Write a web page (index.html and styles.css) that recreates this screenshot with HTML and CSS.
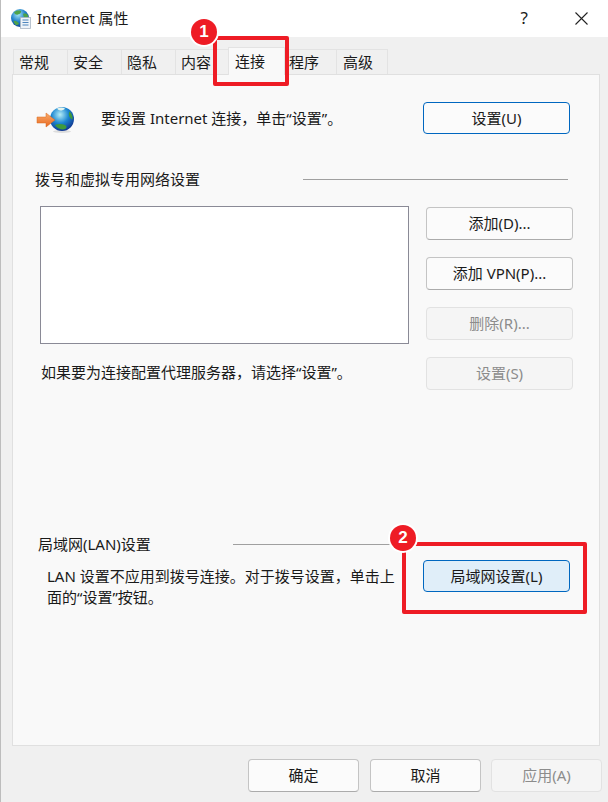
FILE: index.html
```html
<!DOCTYPE html>
<html lang="zh-CN">
<head>
  <meta charset="UTF-8" />
  <title>Internet 属性</title>
  <link rel="stylesheet" href="styles.css">
</head>
<body>
  <div class="dialog">
    <div class="titlebar">
      <svg class="title-icon" width="20" height="20" viewBox="0 0 20 20">
        <defs>
          <radialGradient id="seaSmall" cx="40%" cy="30%" r="75%">
            <stop offset="0" stop-color="#a5e6f5"/>
            <stop offset="0.55" stop-color="#1f7fc9"/>
            <stop offset="1" stop-color="#123f8f"/>
          </radialGradient>
        </defs>
        <circle cx="9" cy="9" r="9" fill="url(#seaSmall)"/>
        <path d="M3 3.500c2-2 5-2.500 7-1.500.5 1.500-1 3-3 3.500-1.500.5-3 0-4-2zM12 5c2-1 4-.5 5 1.500.3 2-.5 3.500-2 4-1.500-.5-2.500-3-3-5.500zM2.500 12c2-.5 4 .5 5.500 2.500-1 1.500-2 2-3 1.500-1-.5-2-2.500-2.500-4z" fill="#4fa34a"/>
        <rect x="9.500" y="8.500" width="10" height="11" fill="#eef3f8" stroke="#aab6c4" stroke-width="0.800"/>
        <path d="M11.500 11h6M11.500 13.500h6M11.500 16h6" stroke="#4f86bd" stroke-width="1"/>
      </svg>
      <span class="title-text">Internet 属性</span>
      <span class="title-help">?</span>
      <svg class="title-close" width="13" height="13" viewBox="0 0 13 13">
        <path d="M.5.500l12 12M12.500.500l-12 12" stroke="#222" stroke-width="1.100" fill="none"/>
      </svg>
    </div>

    <div class="tabs">
      <div class="tab">常规</div>
      <div class="tab">安全</div>
      <div class="tab">隐私</div>
      <div class="tab">内容</div>
      <div class="tab tab-active">连接</div>
      <div class="tab tab-program">程序</div>
      <div class="tab tab-advanced">高级</div>
    </div>

    <div class="panel">
      <div class="setup-row">
        <svg class="globe" width="42" height="32" viewBox="0 0 42 32">
          <defs>
            <radialGradient id="sea" cx="42%" cy="32%" r="72%">
              <stop offset="0" stop-color="#b4edf7"/>
              <stop offset="0.5" stop-color="#1c86d1"/>
              <stop offset="1" stop-color="#0f2f8a"/>
            </radialGradient>
            <linearGradient id="arrow" x1="0" y1="0" x2="0" y2="1">
              <stop offset="0" stop-color="#f9ab6c"/>
              <stop offset="1" stop-color="#e8681f"/>
            </linearGradient>
          </defs>
          <ellipse cx="26" cy="29.500" rx="9" ry="1.500" fill="#dcdcdc"/>
          <circle cx="26" cy="17" r="12" fill="url(#sea)"/>
          <path d="M21 6.500c3-1.500 6-1.500 8 0-1 1.500-3 2-4.500 2-1.500 0-2.500-1-3.500-2z" fill="#e6f5ee"/>
          <path d="M33.500 9.500c2 2 3.500 4.500 3 8-1.500-.5-3-2-3.500-4-.5-2 0-3 .5-4zM19 23c3-1.500 7-1.500 10 0 1.500 1 2 2 1 3.500-3 1.500-5.500 1-8-.5-1.500-1-2.500-2-3-3z" fill="#3f9a3c"/>
          <path d="M1 15h9v-4l9 7-9 7v-4H1z" fill="url(#arrow)" stroke="#d9691f" stroke-width="0.500"/>
        </svg>
        <span class="setup-text">要设置 Internet 连接，单击“设置”。</span>
        <button class="btn btn-default">设置(U)</button>
      </div>

      <div class="section-head dial-head">
        <span>拨号和虚拟专用网络设置</span>
        <i class="rule dial-rule"></i>
      </div>

      <div class="dial-grid">
        <div class="dial-left">
          <div class="listbox"></div>
          <p class="proxy-text">如果要为连接配置代理服务器，请选择“设置”。</p>
        </div>
        <div class="dial-buttons">
          <button class="btn">添加(D)...</button>
          <button class="btn">添加 VPN(P)...</button>
          <button class="btn" disabled>删除(R)...</button>
          <button class="btn" disabled>设置(S)</button>
        </div>
      </div>

      <div class="section-head lan-head">
        <span>局域网(LAN)设置</span>
        <i class="rule lan-rule"></i>
      </div>

      <div class="lan-row">
        <p class="lan-text">LAN 设置不应用到拨号连接。对于拨号设置，单击上面的“设置”按钮。</p>
        <button class="btn btn-default btn-lan">局域网设置(L)</button>
      </div>
    </div>

    <div class="footer">
      <button class="btn">确定</button>
      <button class="btn">取消</button>
      <button class="btn" disabled>应用(A)</button>
    </div>

    <!-- annotations on top of the screenshot -->
    <div class="mark mark-one"></div>
    <div class="badge badge-one">1</div>
    <div class="mark mark-two"></div>
    <div class="badge badge-two">2</div>
  </div>
</body>
</html>
```

FILE: styles.css
```css
* {
  box-sizing: border-box;
}
html, body {
  margin: 0;
  padding: 0;
}
body {
  font-family: "Noto Sans", "Noto Sans CJK SC", sans-serif;
  font-size: 15px;
  line-height: 20px;
  color: #1a1a1a;
  background: #f0f0f0;
}
.dialog {
  position: relative;
  width: 608px;
  height: 802px;
  overflow: hidden;
  background: #f0f0f0;
  border-left: 1px solid #bdbdbd;
}
.titlebar {
  display: flex;
  align-items: center;
  height: 37px;
  padding: 0 20px 0 10px;
  background: #fff;
}
.title-icon {
  margin-right: 6px;
}
.title-text {
  flex: 1;
  padding-bottom: 2px;
}
.title-help {
  margin-right: 47px;
  padding-bottom: 2px;
  font-size: 17px;
}
.tabs {
  display: flex;
  align-items: flex-end;
  height: 38px;
  margin-top: -1px;
  padding-left: 12px;
}
.tab {
  width: 54px;
  height: 25px;
  padding-left: 5px;
  line-height: 24px;
  border: 1px solid #e3e3e3;
  border-bottom: none;
  border-right: none;
  background: #f0f0f0;
}
.tab-active {
  position: relative;
  z-index: 1;
  width: 57px;
  height: 28px;
  margin-left: -1px;
  margin-bottom: -1px;
  padding-left: 6px;
  line-height: 27px;
  border-right: 1px solid #e3e3e3;
  background: #f9f9f9;
}
.tab-program {
  width: 52px;
  padding-left: 3px;
}
.tab-advanced {
  width: 52px;
  margin-left: -1px;
  padding-left: 6px;
  border-right: 1px solid #e3e3e3;
}
.panel {
  width: 588px;
  height: 672px;
  margin-left: 11px;
  border: 1px solid #e0e0e0;
  background: #f9f9f9;
}
.setup-row {
  display: flex;
  align-items: center;
  height: 32px;
  margin-top: 27px;
  padding-left: 23px;
}
.globe {
  margin-right: 23px;
}
.setup-text {
  width: 322px;
}
.section-head {
  display: flex;
  align-items: center;
  height: 20px;
}
.rule {
  display: block;
  height: 1px;
  background: #a0a0a0;
}
.dial-head {
  margin-top: 35px;
  padding-left: 22px;
}
.dial-head span,
.lan-head span {
  line-height: 19px;
}
.dial-rule {
  width: 265px;
  margin-left: 103px;
}
.dial-grid {
  display: grid;
  grid-template-columns: 369px 147px;
  column-gap: 17px;
  margin-top: 17px;
  padding-left: 27px;
}
.dial-buttons {
  display: flex;
  flex-direction: column;
  gap: 17px;
  margin-top: 1px;
}
.listbox {
  height: 138px;
  background: #fff;
  border: 1px solid #8a8a96;
}
.proxy-text {
  margin: 18px 0 0 1px;
}
.lan-head {
  margin-top: 144px;
  padding-left: 25px;
}
.lan-rule {
  width: 187px;
  margin-left: 82px;
}
.lan-row {
  display: flex;
  margin-top: 6px;
  padding-left: 34px;
}
.lan-text {
  width: 376px;
  margin: 0;
  padding: 6px 20px 0 0;
  line-height: 21px;
}
.footer {
  display: flex;
  justify-content: flex-end;
  gap: 11px;
  margin-top: 13px;
  padding-right: 6px;
}
.footer .btn {
  width: 111px;
}
.footer .btn:last-child {
  margin-left: -1px;
}
.btn {
  display: block;
  width: 147px;
  height: 33px;
  padding: 0 0 2px;
  font-family: inherit;
  font-size: 15px;
  color: #1a1a1a;
  background: #fbfbfb;
  border: 1px solid #c4c4c4;
  border-bottom-color: #ababab;
  border-radius: 4px;
}
.btn:disabled {
  color: #8c8c8c;
  background: #f5f5f5;
  border-color: #e2e2e2;
}
.btn-default {
  height: 32px;
  border-color: #0067c0;
}
.btn-lan {
  background: #e0eef9;
}
.mark {
  position: absolute;
  border: 4px solid #ee1c25;
  border-radius: 2px;
}
.mark-one {
  left: 212px;
  top: 36px;
  width: 76px;
  height: 50px;
}
.mark-two {
  left: 401px;
  top: 542px;
  width: 185px;
  height: 72px;
}
.badge {
  position: absolute;
  width: 26px;
  height: 26px;
  line-height: 26px;
  text-align: center;
  font-family: "Liberation Sans", sans-serif;
  font-size: 17px;
  font-weight: 700;
  color: #fff;
  background: #ee1c25;
  border-radius: 50%;
  box-shadow: 0 0 0 2px #fff;
}
.badge-one {
  left: 190px;
  top: 19px;
}
.badge-two {
  left: 389px;
  top: 525px;
}
```
